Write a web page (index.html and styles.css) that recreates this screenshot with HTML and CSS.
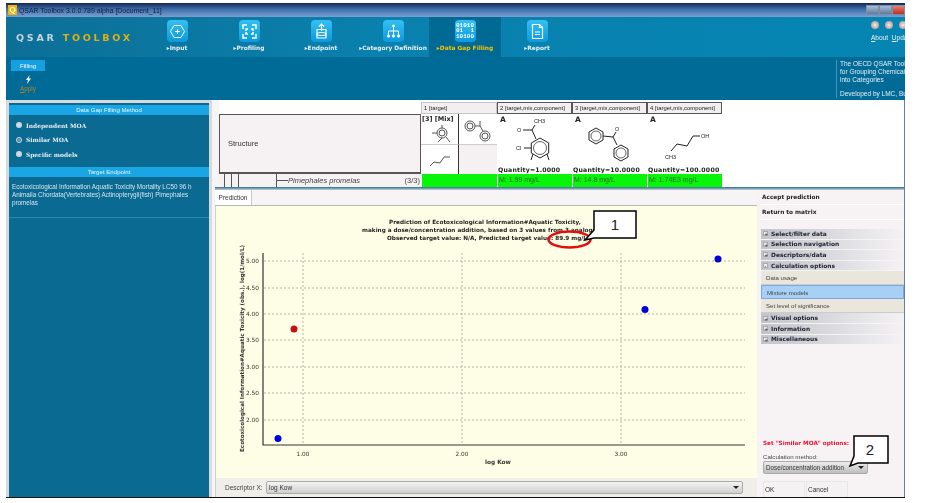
FILE: index.html
```html
<!DOCTYPE html>
<html lang="en">
<head>
    <meta charset="UTF-8">
    <title>QSAR Toolbox</title>
    <link rel="stylesheet" href="styles.css">
</head>
<body>

    <div class="window">
        <div class="titlebar">
            <span class="app-icon">Q</span>
            <span class="title-text">QSAR Toolbox 3.0.0.789 alpha [Document_11]</span>
            <div class="win-controls">
                <span class="win-btn"></span>
                <span class="win-btn"></span>
                <span class="win-btn win-close"></span>
            </div>
        </div>

        <div class="nav">
            <div class="logo">QSAR <span class="logo-gold">TOOLBOX</span></div>
            <div class="tab">
                <span class="tab-icon">
                    <svg width="17" height="17" viewBox="0 0 17 17" fill="none" stroke="#fff" stroke-width="1"><path d="M5 2.500h7l3.500 6-3.500 6H5l-3.500-6z"/><path d="M8.500 6v5M6 8.500h5"/></svg>
                </span>
                <span class="tab-label">Input</span>
            </div>
            <div class="tab">
                <span class="tab-icon">
                    <svg width="17" height="17" viewBox="0 0 17 17" fill="none" stroke="#fff" stroke-width="1.500"><path d="M2 6V2h4M11 2h4v4M2 11v4h4M15 11v4h-4M7 6H5v2M10 6h2v2M7 11H5V9M10 11h2V9"/></svg>
                </span>
                <span class="tab-label">Profiling</span>
            </div>
            <div class="tab">
                <span class="tab-icon">
                    <svg width="17" height="17" viewBox="0 0 17 17" fill="none" stroke="#fff" stroke-width="1.200"><path d="M8.500 1v7M6 3.500L8.500 1 11 3.500"/><path d="M4 6.500h9v8.500H4z"/><ellipse cx="8.500" cy="11" rx="4.500" ry="1.500"/></svg>
                </span>
                <span class="tab-label">Endpoint</span>
            </div>
            <div class="tab">
                <span class="tab-icon">
                    <svg width="17" height="17" viewBox="0 0 17 17" fill="#fff" stroke="#fff" stroke-width="1"><path d="M8.500 3v5M3.500 12V8h10v4M8.500 8v4" fill="none"/><circle cx="8.500" cy="3" r="1"/><circle cx="3.500" cy="13" r="1.200"/><circle cx="8.500" cy="13" r="1.200"/><circle cx="13.500" cy="13" r="1.200"/></svg>
                </span>
                <span class="tab-label">Category Definition</span>
            </div>
            <div class="tab tab-active">
                <span class="tab-icon tab-icon-digits">01010<br>01&nbsp;&nbsp;1<br>10100</span>
                <span class="tab-label">Data Gap Filling</span>
            </div>
            <div class="tab">
                <span class="tab-icon">
                    <svg width="17" height="17" viewBox="0 0 17 17" fill="none" stroke="#fff" stroke-width="1.200"><path d="M3.500 1.500h7l3 3v11h-10z"/><path d="M10.500 1.500v3h3M6 9h5M6 11.500h5"/></svg>
                </span>
                <span class="tab-label">Report</span>
            </div>
            <div class="nav-right">
                <div class="round-btns">
                    <span class="round-btn"></span>
                    <span class="round-btn"></span>
                    <span class="round-btn"></span>
                </div>
                <div class="nav-links"><u>A</u>bout <u>U</u>pdate</div>
            </div>
        </div>

        <div class="ribbon">
            <div class="ribbon-group">
                <div class="ribbon-tab">Filling</div>
                <svg class="bolt" width="7" height="9" viewBox="0 0 7 9"><path d="M4.500 0L1 5h2L2 9l4-5.500H4z" fill="#fff"/></svg>
                <div class="apply"><u>A</u>pply</div>
            </div>
            <div class="about-text">
                <div>The OECD QSAR Toolbox</div>
                <div>for Grouping Chemicals</div>
                <div>into Categories</div>
                <div class="about-dev">Developed by LMC, Bulgaria</div>
            </div>
        </div>

        <div class="main">
            <div class="left-panel">
                <div class="left-inner">
                    <div class="panel-head">Data Gap Filling Method</div>
                    <div class="methods">
                        <div class="method"><span class="radio"></span>Independent MOA</div>
                        <div class="method"><span class="radio radio-on"></span>Similar MOA</div>
                        <div class="method"><span class="radio"></span>Specific models</div>
                    </div>
                    <div class="panel-head">Target Endpoint</div>
                    <div class="endpoint-text">Ecotoxicological Information Aquatic Toxicity Mortality LC50 96 h Animalia Chordata(Vertebrates) Actinopterygii(fish) Pimephales promelas</div>
                </div>
            </div>

            <div class="work">
                <div class="matrix">
                    <div class="m-blank"></div>
                    <div class="m-head">1 [target]</div>
                    <div class="m-head m-boxed">2 [target,mix,component]</div>
                    <div class="m-head m-boxed">3 [target,mix,component]</div>
                    <div class="m-head m-boxed">4 [target,mix,component]</div>

                    <div class="m-structure">Structure</div>
                    <div class="m-mix">
                        <div class="mix-cell">
                            <b class="mix-label">[3] [Mix]</b>
                            <svg class="mix-mol" width="34" height="20" viewBox="0 0 34 20" fill="none" stroke="#555"><circle cx="19" cy="9" r="5"/><circle cx="19" cy="9" r="3"/><path d="M14 9H9M19 14l-4 4M23 13l4 5M19 4V1"/></svg>
                        </div>
                        <div class="mix-cell">
                            <svg width="36" height="29" viewBox="0 0 36 29" fill="none" stroke="#555"><circle cx="10" cy="11" r="5"/><circle cx="10" cy="11" r="3"/><circle cx="25" cy="21" r="5"/><circle cx="25" cy="21" r="3"/><path d="M15 11h5l3 5M20 11V6"/></svg>
                        </div>
                        <div class="mix-cell mix-bottom">
                            <svg width="30" height="20" viewBox="0 0 30 20" fill="none" stroke="#555"><path d="M5 16l4-4 6 1 4-6h6"/></svg>
                        </div>
                        <div class="mix-cell mix-bottom mix-empty"></div>
                    </div>
                    <div class="m-cell">
                        <b class="m-a">A</b>
                        <svg class="mol" width="74" height="51" viewBox="0 0 74 51" fill="none" stroke="#222">
                            <path d="M43 24l8.700 5v10L43 44l-8.700-5V29z"/>
                            <circle cx="43" cy="34" r="6.500" stroke-width="0.700"/>
                            <path d="M39 25l-4-9 3-5M35 16l-9 0M34 34h-7M36 40l-2 6M50 40l2 6"/>
                            <text x="37" y="9" class="atom">CH3</text>
                            <text x="20" y="18" class="atom">O</text>
                            <text x="19" y="36" class="atom">Cl</text>
                        </svg>
                        <b class="qty">Quantity=1.0000</b>
                    </div>
                    <div class="m-cell">
                        <b class="m-a">A</b>
                        <svg class="mol" width="74" height="51" viewBox="0 0 74 51" fill="none" stroke="#222">
                            <path d="M24 14l7 4v8l-7 4-7-4v-8z"/><circle cx="24" cy="22" r="5" stroke-width="0.700"/>
                            <path d="M49 31l7 4v8l-7 4-7-4v-8z"/><circle cx="49" cy="39" r="5" stroke-width="0.700"/>
                            <path d="M31 22l10 1 4 8M41 23l3-5"/>
                            <text x="43" y="17" class="atom">O</text>
                        </svg>
                        <b class="qty">Quantity=10.0000</b>
                    </div>
                    <div class="m-cell">
                        <b class="m-a">A</b>
                        <svg class="mol" width="74" height="51" viewBox="0 0 74 51" fill="none" stroke="#222">
                            <path d="M24 37l6-7 10 2 6-10h7"/>
                            <text x="54" y="24" class="atom">OH</text>
                            <text x="18" y="45" class="atom">CH3</text>
                        </svg>
                        <b class="qty">Quantity=100.0000</b>
                    </div>

                    <div class="m-species">
                        <span class="tree-line tree-a"></span>
                        <span class="tree-line tree-b"></span>
                        <span class="tree-line tree-c"></span>
                        <span class="tree-line tree-d"></span>
                        <span class="tree-dash"></span>
                        <i class="species-name">Pimephales promelas</i>
                        <span class="species-count">(3/3)</span>
                    </div>
                    <div class="m-green"></div>
                    <div class="m-green">M: 1.99 mg/L</div>
                    <div class="m-green">M: 14.8 mg/L</div>
                    <div class="m-green">M: 1.74E3 mg/L</div>
                </div>

                <div class="divider"></div>

                <div class="lower">
                    <div class="prediction">
                        <div class="tabstrip"><span class="pred-tab">Prediction</span></div>
                        <div class="chart">
                            <svg class="plot" width="540" height="272" viewBox="216 206 540 272">
                                <text x="485" y="224" class="ch-title">Prediction of Ecotoxicological Information#Aquatic Toxicity,</text>
                                <text x="483" y="232" class="ch-title">making a dose/concentration addition, based on 3 values from 3 analogues</text>
                                <text x="487" y="240" class="ch-title">Observed target value: N/A, Predicted target value: 89.9 mg/L</text>

                                <g class="grid">
                                    <path d="M303 253V445M462 253V445M621 253V445"/>
                                    <path d="M264 261H745M264 288H745M264 314H745M264 340H745M264 367H745M264 393H745M264 420H745"/>
                                </g>
                                <path d="M263 253V445H745" fill="none" stroke="#333" stroke-width="1.200"/>

                                <text x="259" y="263" class="tick tick-y">5.00</text>
                                <text x="259" y="290" class="tick tick-y">4.50</text>
                                <text x="259" y="316" class="tick tick-y">4.00</text>
                                <text x="259" y="342" class="tick tick-y">3.50</text>
                                <text x="259" y="369" class="tick tick-y">3.00</text>
                                <text x="259" y="395" class="tick tick-y">2.50</text>
                                <text x="259" y="422" class="tick tick-y">2.00</text>
                                <text x="303" y="456" class="tick tick-x">1.00</text>
                                <text x="462" y="456" class="tick tick-x">2.00</text>
                                <text x="621" y="456" class="tick tick-x">3.00</text>
                                <text x="485" y="464" class="axis-x">log Kow</text>
                                <text transform="translate(244 452) rotate(-90)" class="axis-y">Ecotoxicological Information#Aquatic Toxicity (obs.), log(1/mol/L)</text>

                                <circle cx="278" cy="438.500" r="3.500" fill="#0000d8"/>
                                <circle cx="294" cy="329" r="3.500" fill="#c81010"/>
                                <circle cx="645" cy="309.500" r="3.500" fill="#0000d8"/>
                                <circle cx="718" cy="259" r="3.500" fill="#0000d8"/>
                            </svg>
                            <div class="descriptor">
                                <span class="desc-label">Descriptor X:</span>
                                <div class="desc-select">log Kow<span class="arrow"></span></div>
                            </div>
                        </div>
                    </div>

                    <div class="options">
                        <div class="opt-link">Accept prediction</div>
                        <div class="opt-link">Return to matrix</div>
                        <div class="sections">
                            <div class="section"><span class="plus">+</span>Select/filter data</div>
                            <div class="section"><span class="plus">+</span>Selection navigation</div>
                            <div class="section"><span class="plus">+</span>Descriptors/data</div>
                            <div class="section"><span class="plus">-</span>Calculation options</div>
                            <div class="sub">Data usage</div>
                            <div class="sub sub-on">Mixture models</div>
                            <div class="sub">Set level of significance</div>
                            <div class="section"><span class="plus">+</span>Visual options</div>
                            <div class="section"><span class="plus">+</span>Information</div>
                            <div class="section"><span class="plus">+</span>Miscellaneous</div>
                        </div>
                        <div class="opt-form">
                            <div class="opt-red">Set "Similar MOA" options:</div>
                            <div class="opt-label">Calculation method:</div>
                            <div class="opt-select">Dose/concentration addition<span class="arrow"></span></div>
                            <div class="opt-buttons">
                                <span class="opt-btn">OK</span>
                                <span class="opt-btn">Cancel</span>
                            </div>
                        </div>
                    </div>
                </div>
            </div>
        </div>
    </div>

    <!-- annotations drawn over the screenshot -->
    <svg class="marks" width="950" height="503" viewBox="0 0 950 503">
        <ellipse cx="569.500" cy="239.500" rx="21" ry="8" fill="none" stroke="#e01010" stroke-width="2.500"/>
        <path d="M585 240L594 230V211H636V238H594Z" fill="#fff" stroke="#000" stroke-width="1.500"/>
        <path d="M850 466L854 456V436H888V463H858Z" fill="#fff" stroke="#000" stroke-width="1.500"/>
    </svg>
    <span class="callout callout-one">1</span>
    <span class="callout callout-two">2</span>

</body>
</html>
```

FILE: styles.css
```css
body {
    margin: 0;
    background-color: white;
    font-family: "Liberation Sans", Arial, sans-serif;
    width: 950px;
    height: 503px;
    overflow: hidden;
}

.window {
    width: 899px;
    height: 495px;
    margin: 3px 0 0 6px;
    display: flex;
    flex-direction: column;
    overflow: hidden;
    background-color: #f6f4f5;
    border-bottom: 1px solid #111;
    box-sizing: border-box;
    filter: blur(0.3px);
}

/* title bar */
.titlebar {
    height: 14px;
    flex: none;
    display: flex;
    align-items: center;
    background: linear-gradient(180deg, #14264e 0, #3f6fae 45%, #7ba0cf 100%);
    font-size: 6.900px;
    color: #10203a;
}

.app-icon {
    width: 9px;
    height: 10px;
    margin: 0 2px 0 2px;
    background-color: #f5b400;
    color: white;
    font-size: 8px;
    font-weight: bold;
    text-align: center;
    line-height: 10px;
}

.win-controls {
    margin-left: auto;
    display: flex;
}

.win-btn {
    width: 13px;
    height: 10px;
    background: linear-gradient(180deg, #a9bdd4, #5d7a9c);
    border: 1px solid #7a8ea8;
    box-sizing: border-box;
}

.win-close {
    background: linear-gradient(180deg, #e08070, #c03020);
}

/* top nav */
.nav {
    height: 40px;
    flex: none;
    display: flex;
    background: linear-gradient(90deg, #0c6f96 0, #0a80ad 40%, #0585b3 100%);
}

.logo {
    width: 135px;
    box-sizing: border-box;
    padding: 15px 0 0 10px;
    font-family: "DejaVu Sans", sans-serif;
    font-size: 9.500px;
    font-weight: bold;
    letter-spacing: 2.750px;
    color: #c4d4dc;
    white-space: nowrap;
}

.logo-gold {
    color: #e0b010;
}

.tab {
    width: 72px;
    flex: none;
    display: flex;
    flex-direction: column;
    align-items: center;
    padding-top: 3px;
    box-sizing: border-box;
}

.tab-active {
    background-color: #006a94;
}

.tab-icon {
    width: 21px;
    height: 22px;
    border-radius: 4px;
    background: linear-gradient(180deg, #35c0f4, #0a9ade);
    display: flex;
    align-items: center;
    justify-content: center;
}

.tab-icon-digits {
    font-family: "Liberation Mono", monospace;
    font-size: 6px;
    line-height: 5.500px;
    color: white;
    font-weight: bold;
    text-align: center;
}

.tab-label {
    margin-top: 3px;
    font-family: "DejaVu Sans", sans-serif;
    font-size: 5.900px;
    font-weight: bold;
    color: #e6f2f6;
    white-space: nowrap;
}

.tab-label::before {
    content: "\25B8 ";
}

.tab-active .tab-label {
    color: #f2c200;
}

.nav-right {
    margin-left: auto;
    width: 36px;
    overflow: hidden;
    flex: none;
}

.round-btns {
    display: flex;
    gap: 6px;
    padding: 4px 0 0 2px;
}

.round-btn {
    width: 8px;
    height: 8px;
    flex: none;
    border-radius: 50%;
    background: radial-gradient(circle, #f0f0f0 0, #c8a8a0 60%, #8fa8b0 100%);
}

.nav-links {
    margin-top: 5px;
    padding-left: 2px;
    font-size: 6.500px;
    color: #eaf4f8;
    white-space: nowrap;
    word-spacing: 2px;
}

/* second band */
.ribbon {
    height: 43px;
    flex: none;
    display: flex;
    background-color: #006b96;
}

.ribbon-group {
    margin-left: 5px;
    width: 34px;
    display: flex;
    flex-direction: column;
    align-items: center;
    padding-top: 3px;
}

.ribbon-tab {
    width: 34px;
    height: 11px;
    background-color: #16a0e2;
    color: white;
    font-size: 6.200px;
    line-height: 11px;
    text-align: center;
}

.bolt {
    margin-top: 4px;
}

.apply {
    margin-top: 1px;
    font-size: 6.300px;
    color: #b8841e;
}

.about-text {
    margin-left: auto;
    width: 69px;
    height: 38px;
    margin-top: 3px;
    padding-left: 3px;
    box-sizing: border-box;
    border-left: 1px solid #4a93b2;
    font-size: 6.500px;
    line-height: 8px;
    color: #e4eff4;
    white-space: nowrap;
    overflow: hidden;
}

.about-dev {
    margin-top: 6px;
}

/* main area */
.main {
    flex: 1;
    min-height: 0;
    display: flex;
    border-right: 1px solid #6a7aa0;
}

.left-panel {
    width: 206px;
    flex: none;
    box-sizing: border-box;
    padding: 3px 3px 0;
    background-color: #d8dadc;
    margin-right: 3px;
}

.left-inner {
    height: 100%;
    background-color: #0a6a92;
    padding-top: 2px;
    box-sizing: border-box;
}

.panel-head {
    height: 10px;
    background-color: #1aa6e4;
    color: #e8f6fc;
    font-size: 6.100px;
    line-height: 10px;
    text-align: center;
}

.methods {
    height: 52px;
    padding: 3px 0 0 7px;
    box-sizing: border-box;
}

.method {
    display: flex;
    align-items: center;
    height: 14.500px;
    font-family: "DejaVu Serif", serif;
    font-size: 5.900px;
    font-weight: bold;
    color: #e8eef2;
}

.radio {
    width: 6px;
    height: 6px;
    border-radius: 50%;
    background-color: #cfd8dc;
    margin-right: 4px;
}

.radio-on {
    background-color: #0a6a92;
    border: 1px solid #dfe6ea;
    box-shadow: inset 0 0 0 1px #0a6a92, inset 0 0 0 3px #9fb4bc;
    box-sizing: border-box;
}

.endpoint-text {
    height: 41px;
    padding: 6px 14px 0 3px;
    box-sizing: border-box;
    border-bottom: 1px solid #2a8bb0;
    font-size: 6.300px;
    line-height: 8px;
    color: #d5e6ee;
}

.work {
    flex: 1;
    min-width: 0;
    display: flex;
    flex-direction: column;
}

/* data matrix */
.matrix {
    height: 87px;
    flex: none;
    margin-left: 4px;
    padding-top: 2px;
    box-sizing: border-box;
    background-color: white;
    display: grid;
    grid-template-columns: 202px 76px 75px 75px 75px;
    grid-template-rows: 12px 60px 13px;
    font-size: 7px;
    color: #222;
}

.m-blank {
    background-color: white;
}

.m-head {
    font-size: 5.900px;
    line-height: 11px;
    padding-left: 2px;
    background-color: #f3eff1;
    border: 1px solid #c8c4c6;
    box-sizing: border-box;
    white-space: nowrap;
    overflow: hidden;
}

.m-boxed {
    border-color: #555;
}

.m-structure {
    display: flex;
    align-items: center;
    padding-left: 8px;
    font-size: 7.500px;
    color: #333;
    background-color: #f6f2f4;
    border: 1px solid #555;
    border-bottom-width: 2px;
    box-sizing: border-box;
}

.m-mix {
    display: grid;
    grid-template-columns: 38px 38px;
    grid-template-rows: 30px 30px;
}

.mix-cell {
    position: relative;
    background-color: white;
    display: flex;
    align-items: center;
    justify-content: center;
}

.mix-cell:nth-child(odd) {
    border-right: 1px solid #333;
}

.mix-bottom {
    border-top: 1px solid #ccc;
}

.mix-empty {
    background-color: #f5f1f3;
}

.mix-label {
    position: absolute;
    left: 1px;
    top: 1px;
    font-family: "DejaVu Sans", sans-serif;
    font-size: 6.500px;
    white-space: nowrap;
}

.mix-mol {
    margin-top: 10px;
}

.m-cell {
    position: relative;
    background-color: white;
    overflow: hidden;
}

.m-a {
    position: absolute;
    left: 3px;
    top: 1px;
    font-family: "DejaVu Sans", sans-serif;
    font-size: 7.500px;
}

.mol {
    display: block;
}

.atom {
    font-size: 5.500px;
    fill: #222;
    stroke: none;
}

.qty {
    position: absolute;
    left: 1px;
    bottom: 0;
    font-family: "DejaVu Sans", sans-serif;
    font-size: 6.200px;
    line-height: 9px;
    letter-spacing: 0.200px;
    white-space: nowrap;
}

.m-species {
    position: relative;
    background-color: #f6f2f4;
    display: flex;
    align-items: center;
    padding-left: 69px;
    font-size: 7.500px;
    color: #444;
}

.tree-line {
    position: absolute;
    top: 0;
    bottom: 0;
    width: 1px;
    background-color: #555;
}

.tree-a { left: 5px; }
.tree-b { left: 12px; }
.tree-c { left: 19px; }
.tree-d { left: 57px; }

.tree-dash {
    position: absolute;
    left: 58px;
    top: 6px;
    width: 11px;
    height: 1px;
    background-color: #555;
}

.species-count {
    margin-left: auto;
    padding-right: 1px;
}

.m-green {
    background-color: #08f408;
    margin-left: 1px;
    padding-left: 1px;
    font-size: 7px;
    line-height: 12px;
    color: #2a6a2a;
    white-space: nowrap;
}

.divider {
    height: 3px;
    flex: none;
    background: linear-gradient(180deg, #2a6f90, #c8d0d8);
}

.lower {
    flex: 1;
    min-height: 0;
    display: flex;
}

/* prediction tab and chart */
.prediction {
    width: 542px;
    flex: none;
    display: flex;
    flex-direction: column;
}

.tabstrip {
    height: 16px;
    flex: none;
    border-bottom: 1px solid #b8b8b8;
    box-sizing: border-box;
}

.pred-tab {
    display: block;
    width: 36px;
    height: 15px;
    background-color: white;
    border-right: 1px solid #ccc;
    font-size: 6.500px;
    line-height: 15px;
    text-align: center;
    color: #333;
}

.chart {
    flex: 1;
    min-height: 0;
    display: flex;
    flex-direction: column;
    background-color: #fefee6;
    border-left: 1px solid #d0d0d0;
}

.plot {
    display: block;
    flex: none;
}

.plot text {
    font-family: "DejaVu Sans", sans-serif;
}

.ch-title {
    font-size: 5.700px;
    font-weight: bold;
    fill: #222;
    text-anchor: middle;
}

.grid path {
    fill: none;
    stroke: #b4b4a8;
    stroke-width: 1;
    stroke-dasharray: 2 2;
}

.tick {
    font-size: 5.800px;
    fill: #333;
}

.tick-y {
    text-anchor: end;
}

.tick-x {
    text-anchor: middle;
}

.axis-x {
    font-size: 5.800px;
    font-weight: bold;
    fill: #333;
}

.axis-y {
    font-size: 5.600px;
    font-weight: bold;
    fill: #333;
}

.descriptor {
    flex: 1;
    display: flex;
    align-items: flex-start;
    background-color: #f0eee8;
    padding: 3px 0 0 9px;
}

.desc-label {
    width: 41px;
    flex: none;
    font-size: 6.500px;
    line-height: 13px;
    color: #444;
    white-space: nowrap;
}

.desc-select {
    position: relative;
    width: 477px;
    height: 13px;
    padding-left: 2px;
    border: 1px solid #aaa;
    border-radius: 2px;
    box-sizing: border-box;
    background: linear-gradient(180deg, #f4f4f4, #cfcfcf);
    font-size: 6.500px;
    line-height: 11px;
    color: #333;
}

.arrow {
    position: absolute;
    right: 3px;
    top: 4px;
    border-left: 3px solid transparent;
    border-right: 3px solid transparent;
    border-top: 3px solid #222;
}

/* options column */
.options {
    flex: 1;
    min-width: 0;
    display: flex;
    flex-direction: column;
    background-color: #f7f3f4;
    padding-left: 4px;
    font-family: "DejaVu Sans", sans-serif;
}

.opt-link {
    height: 14px;
    font-size: 5.800px;
    font-weight: bold;
    line-height: 14px;
    color: #222;
    padding-left: 1px;
    border-bottom: 1px solid #fff;
    white-space: nowrap;
}

.sections {
    margin-top: 9px;
}

.section {
    height: 10.600px;
    display: flex;
    align-items: center;
    background: linear-gradient(90deg, #c2c4ca, #f4f2f4);
    font-size: 5.900px;
    font-weight: bold;
    color: #223;
    border-bottom: 1px solid #f4f4f4;
    box-sizing: border-box;
    white-space: nowrap;
}

.plus {
    width: 5px;
    height: 5px;
    margin: 0 3px 0 2px;
    background-color: #eee;
    border: 1px solid #aaa;
    font-size: 5px;
    line-height: 4px;
    text-align: center;
    font-weight: normal;
    box-sizing: border-box;
}

.sub {
    height: 14px;
    padding-left: 5px;
    background-color: #ebe6dc;
    border-bottom: 1px solid #ccc;
    box-sizing: border-box;
    font-family: "Liberation Sans", sans-serif;
    font-size: 6.100px;
    line-height: 13px;
    color: #444;
    white-space: nowrap;
}

.sub-on {
    background-color: #a8d0f6;
    border: 1px solid #7aa8d8;
}

.opt-form {
    margin-top: auto;
    padding-left: 2px;
}

.opt-red {
    font-size: 5.700px;
    font-weight: bold;
    color: #f01030;
    white-space: nowrap;
}

.opt-label {
    margin-top: 7px;
    font-family: "Liberation Sans", sans-serif;
    font-size: 6.200px;
    color: #444;
}

.opt-select {
    position: relative;
    width: 105px;
    height: 13px;
    margin-top: 1px;
    padding-left: 2px;
    box-sizing: border-box;
    background: linear-gradient(180deg, #eeeeee, #bdbdbd);
    border: 1px solid #aaa;
    border-radius: 2px;
    font-family: "Liberation Sans", sans-serif;
    font-size: 6.300px;
    line-height: 11px;
    color: #333;
    white-space: nowrap;
}

.opt-buttons {
    display: flex;
    margin-top: 7px;
    gap: 1px;
}

.opt-btn {
    width: 42px;
    height: 16px;
    padding-left: 1px;
    box-sizing: border-box;
    background-color: #f4f2f2;
    border: 1px solid #e8e6e6;
    border-bottom: 0;
    font-family: "Liberation Sans", sans-serif;
    font-size: 6.500px;
    line-height: 16px;
    color: #333;
}

/* annotations */
.marks {
    position: absolute;
    left: 0;
    top: 0;
}

.callout {
    position: absolute;
    font-size: 15px;
    color: #222;
    width: 20px;
    text-align: center;
}

.callout-one {
    left: 605px;
    top: 216px;
}

.callout-two {
    left: 860px;
    top: 441px;
}
```
